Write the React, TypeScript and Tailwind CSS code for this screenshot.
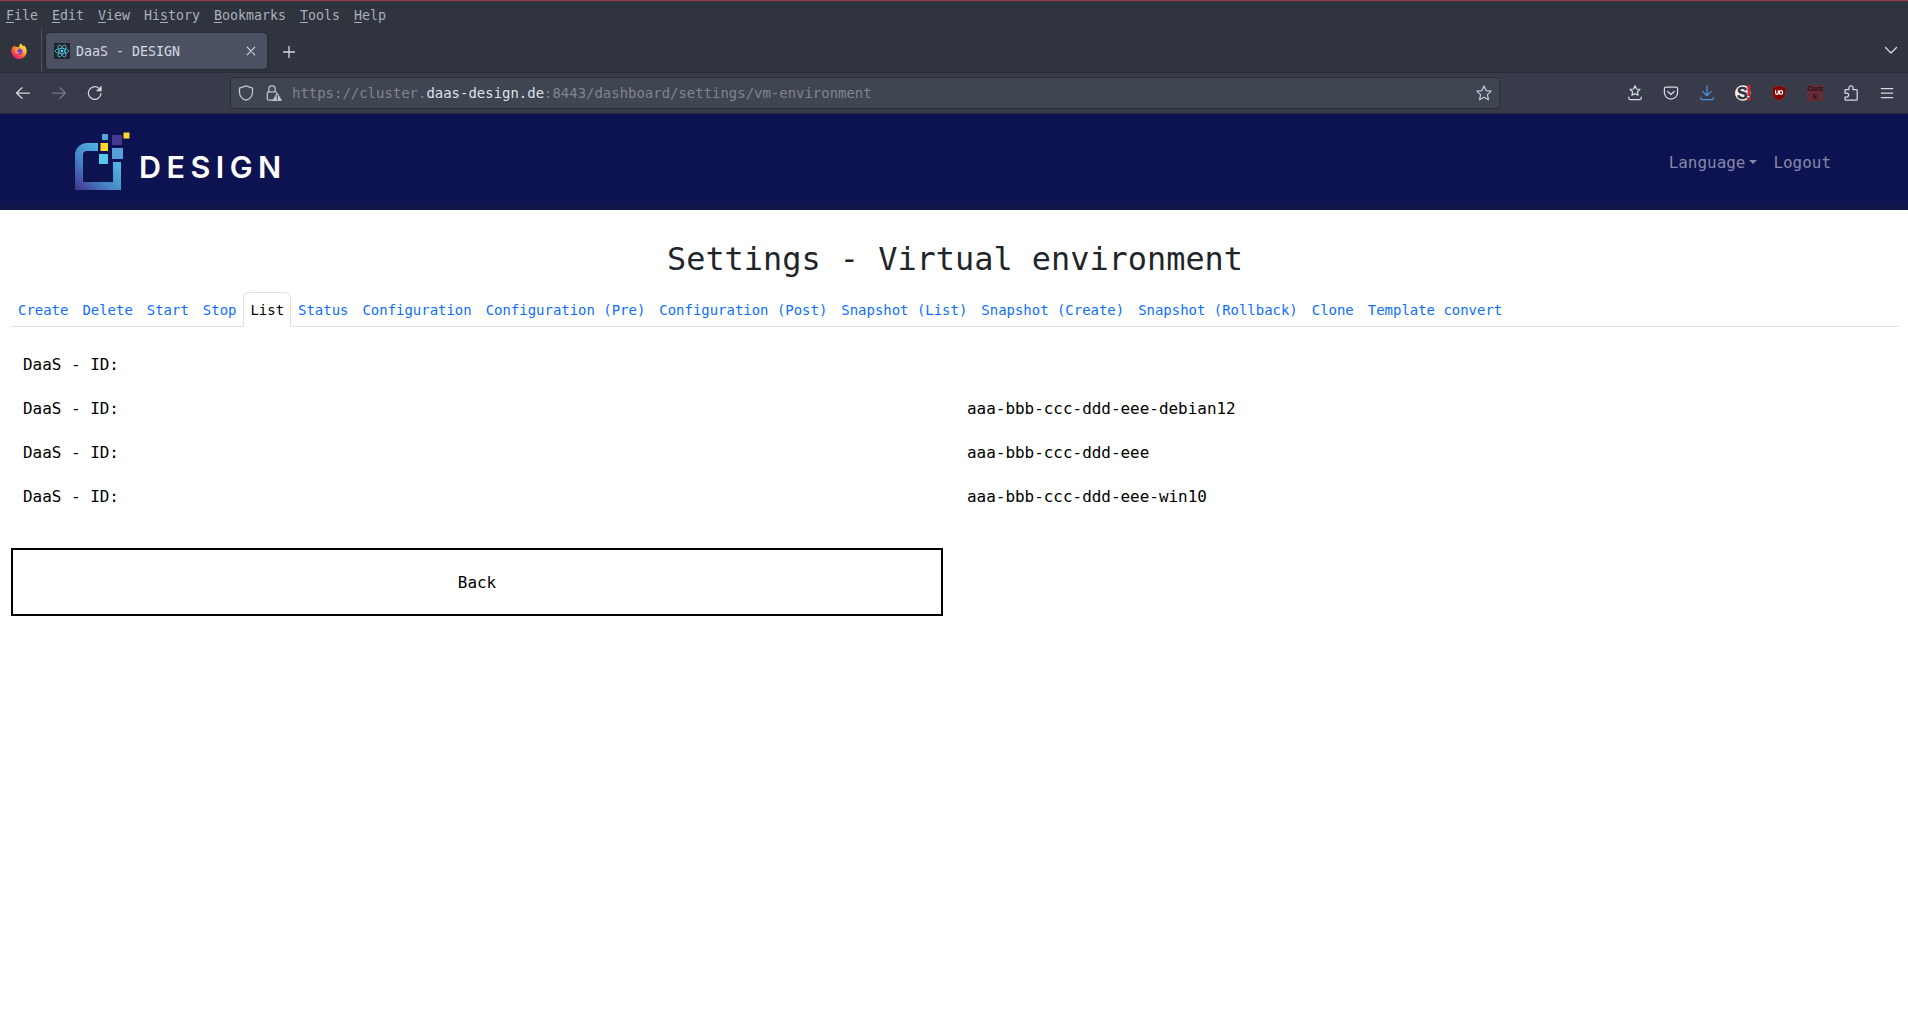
import React from "react";

const MENU: [string, string, string][] = [
  ["", "F", "ile"],
  ["", "E", "dit"],
  ["", "V", "iew"],
  ["Hi", "s", "tory"],
  ["", "B", "ookmarks"],
  ["", "T", "ools"],
  ["", "H", "elp"],
];

const TABS = [
  "Create",
  "Delete",
  "Start",
  "Stop",
  "List",
  "Status",
  "Configuration",
  "Configuration (Pre)",
  "Configuration (Post)",
  "Snapshot (List)",
  "Snapshot (Create)",
  "Snapshot (Rollback)",
  "Clone",
  "Template convert",
];

const ROWS = ["", "aaa-bbb-ccc-ddd-eee-debian12", "aaa-bbb-ccc-ddd-eee", "aaa-bbb-ccc-ddd-eee-win10"];

function Icon({ children, className = "" }: { children: React.ReactNode; className?: string }) {
  return (
    <svg
      viewBox="0 0 16 16"
      className={`size-4 shrink-0 ${className}`}
      fill="none"
      stroke="currentColor"
      strokeWidth="1.25"
      strokeLinecap="round"
      strokeLinejoin="round"
    >
      {children}
    </svg>
  );
}

function FirefoxLogo() {
  return (
    <svg viewBox="0 0 16 16" className="size-4">
      <defs>
        <linearGradient id="fox" x1="0.85" y1="0.05" x2="0.2" y2="0.95">
          <stop offset="0" stopColor="#fff44f" />
          <stop offset="0.35" stopColor="#ffb32e" />
          <stop offset="0.65" stopColor="#ff5a36" />
          <stop offset="1" stopColor="#e31587" />
        </linearGradient>
      </defs>
      <path
        d="M10 .2c.4 1.500 1.700 2.400 2.600 3.300.2-.4.2-.8.1-1.200 2 1.500 3 3.900 3 6.100A7.700 7.700 0 0 1 8 16 7.700 7.700 0 0 1 .3 8.300c0-2 .5-3.500 1.400-4.900l.6 1.100C2.700 3.600 3.300 3 4 2.600l.3 1.500c1.300-.2 2.700 0 3.800.3C7.900 2.800 8.700 1.200 10 .2z"
        fill="url(#fox)"
      />
      <circle cx="8.200" cy="8.600" r="3.200" fill="#7a3be0" />
      <path d="M3.500 6c1.500-.9 3.500-.7 4.700.4-1.500 0-1.900.8-2.300 1.400.1 1.500 1.500 2 3 1.600-.8 1.500-3.500 1.800-4.700.2C3.500 8.600 3.200 7 3.500 6z" fill="#ff9a2e" />
    </svg>
  );
}

function ReactFavicon() {
  return (
    <svg viewBox="0 0 16 16" className="size-4" fill="none" stroke="#53c1de" strokeWidth="0.8">
      <rect width="16" height="16" rx="1" fill="#20232a" stroke="none" />
      <ellipse cx="8" cy="8" rx="6.800" ry="2.600" />
      <ellipse cx="8" cy="8" rx="6.800" ry="2.600" transform="rotate(60 8 8)" />
      <ellipse cx="8" cy="8" rx="6.800" ry="2.600" transform="rotate(120 8 8)" />
      <circle cx="8" cy="8" r="1.300" fill="#61dafb" stroke="none" />
    </svg>
  );
}

function BrandMark() {
  return (
    <svg viewBox="0 0 56 59" className="h-[59px] w-14 shrink-0">
      <defs>
        <linearGradient id="frame" x1="0.05" y1="0.95" x2="0.75" y2="0.2">
          <stop offset="0" stopColor="#443a94" />
          <stop offset="0.45" stopColor="#4584c4" />
          <stop offset="1" stopColor="#4fb9e6" />
        </linearGradient>
      </defs>
      <path d="M23 11H12A12 12 0 0 0 0 23V58H46V30H38V50H8V23A4 4 0 0 1 12 19H23Z" fill="url(#frame)" />
      <rect x="27" y="2" width="6" height="6" fill="#55a3dc" />
      <rect x="37" y="3" width="10" height="10" fill="#45398f" />
      <rect x="48.500" y="0.500" width="6" height="6" fill="#ffd92f" />
      <rect x="25.500" y="11" width="7.500" height="8" fill="#ffd92f" />
      <rect x="37" y="16" width="11" height="11" fill="#559fdb" />
      <rect x="24" y="22" width="9" height="10" fill="#59c8ee" />
    </svg>
  );
}

function BrowserChrome() {
  return (
    <div className="text-[#d3dae3]">
      <div className="flex h-7 items-center border-t border-[#9a3f45] bg-[#2f343f] pt-[3px] text-[13.290px] text-[#a9b0ba]">
        {MENU.map(([pre, key, post]) => (
          <span key={pre + key + post} className="mr-3.5 first:ml-1.5">
            {pre}
            <span className="underline decoration-1 underline-offset-[2px]">{key}</span>
            {post}
          </span>
        ))}
      </div>
      <div className="flex h-11 items-center bg-[#2f343f]">
        <div className="flex h-full w-[42px] items-center border-r border-[#4b4f5a] pt-[2px] pl-[11px]">
          <FirefoxLogo />
        </div>
        <div className="mt-[2px] ml-1 flex h-9 w-[221px] items-center rounded bg-[#4b5062] pr-[10px] pl-2 shadow-[0_0_3px_rgba(0,0,0,0.4)]">
          <ReactFavicon />
          <span className="ml-1.5 flex-1 pt-px text-[13.290px]">DaaS - DESIGN</span>
          <svg viewBox="0 0 12 12" className="size-3" stroke="currentColor" strokeWidth="1.1" strokeLinecap="round">
            <path d="M2.200 2.200l7.600 7.600M9.800 2.200l-7.600 7.600" />
          </svg>
        </div>
        <svg viewBox="0 0 14 14" className="mt-[3px] ml-[15px] size-3.5" stroke="currentColor" strokeWidth="1.3" strokeLinecap="round">
          <path d="M7 1.500v11M1.500 7h11" />
        </svg>
        <Icon className="mr-[9px] ml-auto">
          <path d="M2.500 5.500L8 11l5.500-5.500" />
        </Icon>
      </div>
      <div className="flex h-[42px] items-center border-y border-[#2a2d38] bg-[#383b4a]">
        <Icon className="ml-[15px]">
          <path d="M14.500 8H1.800M7 2.800L1.500 8 7 13.200" />
        </Icon>
        <Icon className="ml-5 text-[#757985]">
          <path d="M1.500 8h12.700M9 2.800L14.500 8 9 13.200" />
        </Icon>
        <Icon className="ml-5">
          <path d="M14 8.500A6.300 6.300 0 1 1 11.800 3.200" />
          <path d="M14.300 1.500v4.500H9.800z" fill="currentColor" strokeWidth="0.6" />
        </Icon>
        <div className="ml-[127px] flex h-8 w-[1270px] items-center rounded border border-[#2a2d38] bg-[#404552] pr-[7px] pl-[7px] text-[#c0c7d4]">
          <Icon>
            <path d="M8 .9l6.500 2.300v4C14.500 11 12 13.800 8 15.200 4 13.800 1.500 11 1.500 7.200v-4z" />
          </Icon>
          <Icon className="ml-3">
            <path d="M7 15.200H2.800a1.500 1.500 0 0 1-1.500-1.500V8.300a1.500 1.500 0 0 1 1.500-1.500h6.400a1.500 1.500 0 0 1 1.200.7M2.800 6.800V4a3.200 3.200 0 0 1 6.400 0v2.800" />
            <path d="M11.300 8.300l4.200 7.200H7.200z" fill="currentColor" strokeWidth="0.8" />
            <path d="M11.300 10.500v2.300M11.300 14.200v.2" stroke="#404552" strokeWidth="1.200" />
          </Icon>
          <span className="ml-[10px] flex-1 text-[13.960px] text-[#81858f]">
            https://cluster.<span className="text-[#dce2eb]">daas-design.de</span>:8443/dashboard/settings/vm-environment
          </span>
          <Icon>
            <path d="M8 .9l2.100 4.700 5.100.5-3.800 3.500 1.100 5.200L8 12.200l-4.500 2.600 1.100-5.200L.8 6.100l5.100-.5z" />
          </Icon>
        </div>
        <div className="ml-auto flex items-center gap-5 pr-[13px]">
          <Icon>
            <path d="M8 .8l1.500 3.200 3.500.4-2.600 2.400.7 3.500L8 8.600l-3.100 1.700.7-3.500L3 4.400 6.500 4z" />
            <path d="M1.800 12v1.200a1.300 1.300 0 0 0 1.300 1.300h9.800a1.300 1.300 0 0 0 1.300-1.300V12" />
          </Icon>
          <Icon>
            <path d="M3 2.200h10a1.600 1.600 0 0 1 1.600 1.600V7.500a6.600 6.600 0 0 1-13.200 0V3.800A1.600 1.600 0 0 1 3 2.200z" />
            <path d="M4.800 6.500L8 9.500l3.200-3" />
          </Icon>
          <Icon className="text-[#4a90e2]">
            <path d="M8 .8v9.700M4 6.800l4 3.900 4-3.900M1.700 12.300v.9a1.300 1.300 0 0 0 1.300 1.300h10a1.300 1.300 0 0 0 1.300-1.300v-.9" />
          </Icon>
          <svg viewBox="0 0 16 16" className="size-4">
            <circle cx="7.800" cy="8" r="7.800" fill="#f4f4f4" />
            <text x="2" y="13.600" fontSize="16" fontWeight="700" fill="#2f3440" stroke="#2f3440" strokeWidth="0.5" fontFamily="Liberation Sans, sans-serif">S</text>
            <path d="M12.300 .3h3.200l-.4 10.700h-2.400z" fill="#dc2027" />
            <circle cx="13.800" cy="13.800" r="1.900" fill="#dc2027" />
          </svg>
          <svg viewBox="0 0 16 16" className="size-4">
            <path d="M8 .5c2 1.200 4.300 1.600 6.500 1.700V7c0 4-2.800 7-6.500 8.700C4.300 14 1.500 11 1.500 7V2.200C3.700 2.100 6 1.700 8 .5z" fill="#800000" stroke="#95302f" strokeWidth="0.6" />
            <path d="M4.600 5.300v2.800q0 1.300 1.300 1.300T7.300 8.100V5.300" fill="none" stroke="#fff" strokeWidth="1.2" />
            <circle cx="10" cy="7.400" r="1.700" fill="none" stroke="#fff" strokeWidth="1.200" />
          </svg>
          <div className="flex size-4 flex-col items-center overflow-hidden bg-[#672b35] font-['Liberation_Sans',sans-serif] text-[7px] leading-[8px] font-bold text-[#1e1418]">
            <span>Cors</span>
            <span>E</span>
          </div>
          <Icon>
            <path d="M2 7.200V5.500A1 1 0 0 1 3 4.500h3V2.800a2 2 0 0 1 4 0v1.700h3.200a1 1 0 0 1 1 1v8.700a1 1 0 0 1-1 1H3a1 1 0 0 1-1-1V12h1.700a1.800 1.800 0 0 0 0-3.800H2z" />
          </Icon>
          <Icon>
            <path d="M2.300 3.500h11.400M2.300 8h11.400M2.300 12.500h11.400" />
          </Icon>
        </div>
      </div>
    </div>
  );
}

function Navbar() {
  return (
    <header className="flex h-24 items-center border-b-8 border-[#12154a] bg-[#0d1250] pr-[77px] pl-[75px]">
      <div className="flex items-center pt-[7px]">
        <BrandMark />
        <span className="mt-[12px] ml-[8px] font-['Inter',sans-serif] text-[30.500px] leading-none font-semibold tracking-[5.500px] text-white">
          DESIGN
        </span>
      </div>
      <nav className="ml-auto flex items-center gap-4 pt-[9px] text-[15.950px] text-[#8688a7]">
        <span className="flex items-center">
          Language
          <span className="mb-[2px] ml-1 border-x-[4.500px] border-t-[4.500px] border-x-transparent border-t-[#8688a7]" />
        </span>
        <span>Logout</span>
      </nav>
    </header>
  );
}

export default function App() {
  return (
    <div className="min-h-[1015px] bg-white font-['DejaVu_Sans_Mono',monospace] leading-6">
      <BrowserChrome />
      <Navbar />
      <main className="pr-[9px] pl-[11px]">
        <h1 className="mt-[30px] text-center text-[31.900px] leading-[38px] text-[#212529]">Settings - Virtual environment</h1>
        <div className="mt-[14px] flex h-[35px] border-b border-[#dee2e6] text-[13.965px] leading-[21px]">
          {TABS.map((tab) =>
            tab === "List" ? (
              <span key={tab} className="-mb-px rounded-t-md border border-[#dee2e6] border-b-white bg-white px-1.5 pt-[7px] pb-[5px] text-black">
                {tab}
              </span>
            ) : (
              <span key={tab} className="px-[7px] pt-2 pb-1.5 whitespace-nowrap text-[#0d6efd]">
                {tab}
              </span>
            ),
          )}
        </div>
        <div className="mt-[16px] text-[15.950px] text-black">
          {ROWS.map((value, i) => (
            <div key={i} className="grid h-11 grid-cols-2 items-center">
              <span className="pl-3">DaaS - ID:</span>
              <span className="pl-3">{value}</span>
            </div>
          ))}
        </div>
        <button className="mt-[29px] flex h-17 w-[932px] items-center justify-center border-2 border-black pt-[2px] text-[15.950px] text-black">
          Back
        </button>
      </main>
    </div>
  );
}
